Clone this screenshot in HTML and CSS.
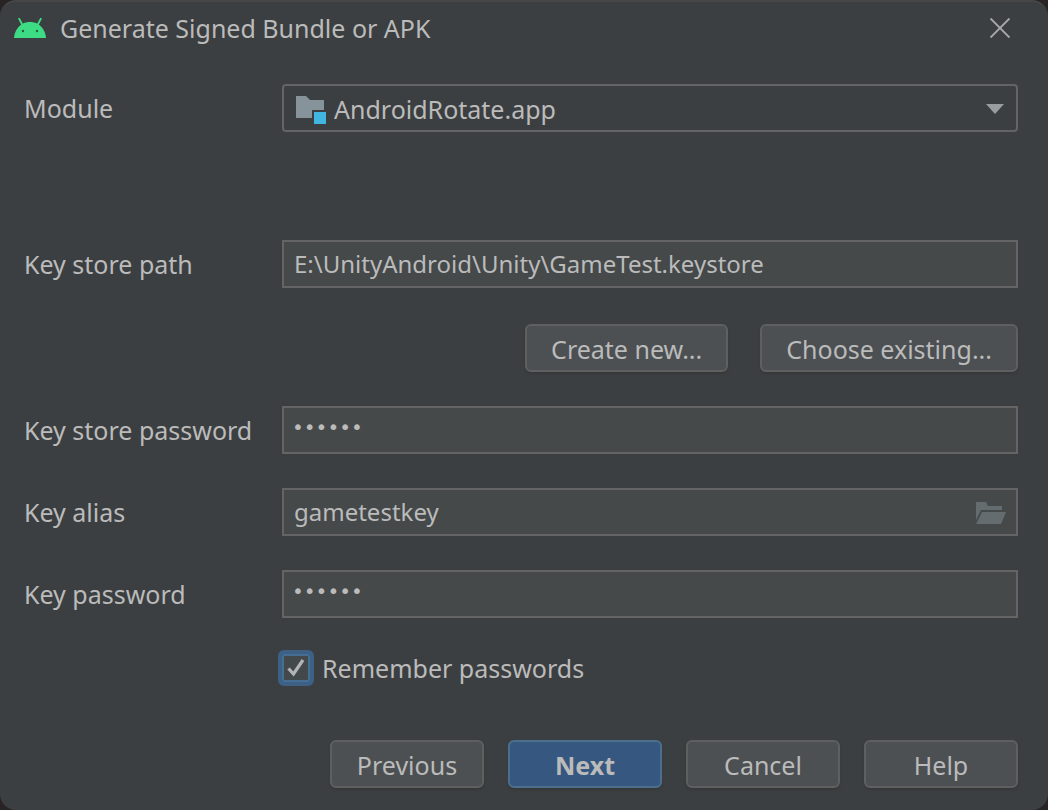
FILE: index.html
```
<!DOCTYPE html>
<html lang="en">
<head>
<meta charset="utf-8">
<title>Generate Signed Bundle or APK</title>
<link rel="stylesheet" href="styles.css">
</head>
<body>
<main class="dialog">
  <header class="titlebar">
    <svg class="android" viewBox="0 0 32 20" aria-hidden="true">
      <path d="M0 20C.5 13.500 4 8 9 5.500 13 3.500 19 3.500 23 5.500 28 8 31.500 13.500 32 20Z" fill="#3ddc84"/>
      <path d="M4.800 0 8.200 6.500M27.200 0 23.800 6.500" stroke="#3ddc84" stroke-width="1.800" fill="none"/>
      <circle cx="9" cy="13" r="1.200" fill="#25603f"/><circle cx="23" cy="13" r="1.200" fill="#25603f"/>
    </svg>
    <h1 class="title">Generate Signed Bundle or APK</h1>
    <button class="close" type="button" aria-label="Close">
      <svg viewBox="0 0 20 20" aria-hidden="true"><path d="M.5.5 19.500 19.500M19.500.5.5 19.500" stroke="#a9abac" stroke-width="1.900" fill="none"/></svg>
    </button>
  </header>
  <form class="form">
    <div class="row row-module">
      <label for="module">Module</label>
      <div class="control">
        <select id="module" class="field combo"><option>AndroidRotate.app</option></select>
        <svg class="module-icon" viewBox="0 0 30 28" aria-hidden="true">
          <path d="M0 0H10L14 4H28V14H16V22H0Z" fill="#87939a"/><path d="M18 16H30V28H18Z" fill="#40b6e0"/>
        </svg>
        <svg class="arrow" viewBox="0 0 18 10" aria-hidden="true"><path d="M0 0H18L9 10Z" fill="#9a9da0"/></svg>
      </div>
    </div>
    <div class="row row-path">
      <label for="path">Key store path</label>
      <input id="path" class="field" type="text" value="E:\UnityAndroid\Unity\GameTest.keystore">
    </div>
    <div class="actions">
      <button class="button wide" type="button">Create new...</button>
      <button class="button wide" type="button">Choose existing...</button>
    </div>
    <div class="row">
      <label for="storepass">Key store password</label>
      <input id="storepass" class="field secret" type="password" value="secret">
    </div>
    <div class="row">
      <label for="alias">Key alias</label>
      <div class="control">
        <input id="alias" class="field" type="text" value="gametestkey">
        <button class="browse" type="button" aria-label="Choose key alias">
          <svg viewBox="0 0 30 22" aria-hidden="true"><path d="M0 0H10L12 4H26V8H5L0 18ZM6 10H30L25 22H0Z" fill="#646c70"/></svg>
        </button>
      </div>
    </div>
    <div class="row">
      <label for="keypass">Key password</label>
      <input id="keypass" class="field secret" type="password" value="secret">
    </div>
    <div class="remember">
      <span class="check">
        <input id="remember" type="checkbox" checked>
        <svg class="tick" viewBox="0 0 18 20" aria-hidden="true"><path d="M1.500 10.500 6.500 16 16 2" stroke="#b4b4b4" stroke-width="3.200" fill="none"/></svg>
      </span>
      <label for="remember">Remember passwords</label>
    </div>
    <footer class="footer">
      <button class="button" type="button">Previous</button>
      <button class="button primary" type="submit">Next</button>
      <button class="button" type="button">Cancel</button>
      <button class="button" type="button">Help</button>
    </footer>
  </form>
</main>
</body>
</html>
```
FILE: styles.css
```
* { box-sizing: border-box; }
body {
  margin: 0;
  background: #282425;
  color: #bbbbbb;
  font: 25px/32px "Noto Sans", sans-serif;
}
button, input, select { font: inherit; color: inherit; margin: 0; }
svg { display: block; }
.dialog {
  display: flex;
  flex-direction: column;
  min-height: 100vh;
  background: #3c3f41;
  border-top: 2px solid #474747;
  border-radius: 16px;
}
.titlebar {
  display: flex;
  align-items: center;
  padding: 6px 38px 0 14px;
  height: 46px;
}
.android { width: 32px; height: 20px; }
.title { margin: 0 auto 0 14px; font-size: 25px; font-weight: 400; line-height: 32px; }
.close { padding: 0; border: 0; background: none; }
.close svg { width: 20px; height: 20px; }
.form {
  display: flex;
  flex: 1;
  flex-direction: column;
  gap: 34px;
  padding: 36px 30px 22px 24px;
}
.row {
  display: grid;
  grid-template-columns: 258px 1fr;
  align-items: center;
}
.row-path { margin-top: 74px; }
.control { position: relative; }
.field {
  display: block;
  width: 100%;
  height: 48px;
  padding: 0 10px 2px;
  border: 2px solid #646464;
  border-radius: 0;
  background: #45494a;
  font-size: 24px;
  outline: none;
}
.combo {
  appearance: none;
  padding: 2px 40px 0 50px;
  border-radius: 4px;
  background: #3c3f41;
  font-size: 25px;
}
.module-icon { position: absolute; left: 14px; top: 12px; width: 30px; height: 28px; pointer-events: none; }
.arrow { position: absolute; right: 14px; top: 20px; width: 18px; height: 10px; pointer-events: none; }
.browse { position: absolute; right: 12px; top: 14px; padding: 0; border: 0; background: none; }
.browse svg { width: 30px; height: 22px; }
.secret { font-family: "DejaVu Sans", sans-serif; font-size: 20px; padding: 0 8px 6px; }
.actions { display: flex; justify-content: flex-end; gap: 32px; margin-top: 2px; }
.button {
  height: 48px;
  min-width: 154px;
  padding: 2px 12px 0;
  border: 2px solid #5e6060;
  border-radius: 6px;
  background: #4c5052;
  box-shadow: 0 2px 2px #36383a;
}
.wide { padding: 2px 24px 0; }
.primary { background: #365880; border-color: #4c708c; font-weight: 700; }
.remember { display: flex; align-items: center; gap: 8px; margin: -2px 0 0 254px; }
.check { position: relative; }
.check input {
  display: block;
  appearance: none;
  width: 36px;
  height: 36px;
  border: 4px solid #3d6185;
  border-radius: 6px;
  background: #43494b;
  box-shadow: inset 0 0 0 2px #466d94;
}
.tick { position: absolute; left: 9px; top: 8px; width: 18px; height: 20px; pointer-events: none; }
.footer { display: flex; justify-content: flex-end; gap: 24px; margin-top: auto; }
```
